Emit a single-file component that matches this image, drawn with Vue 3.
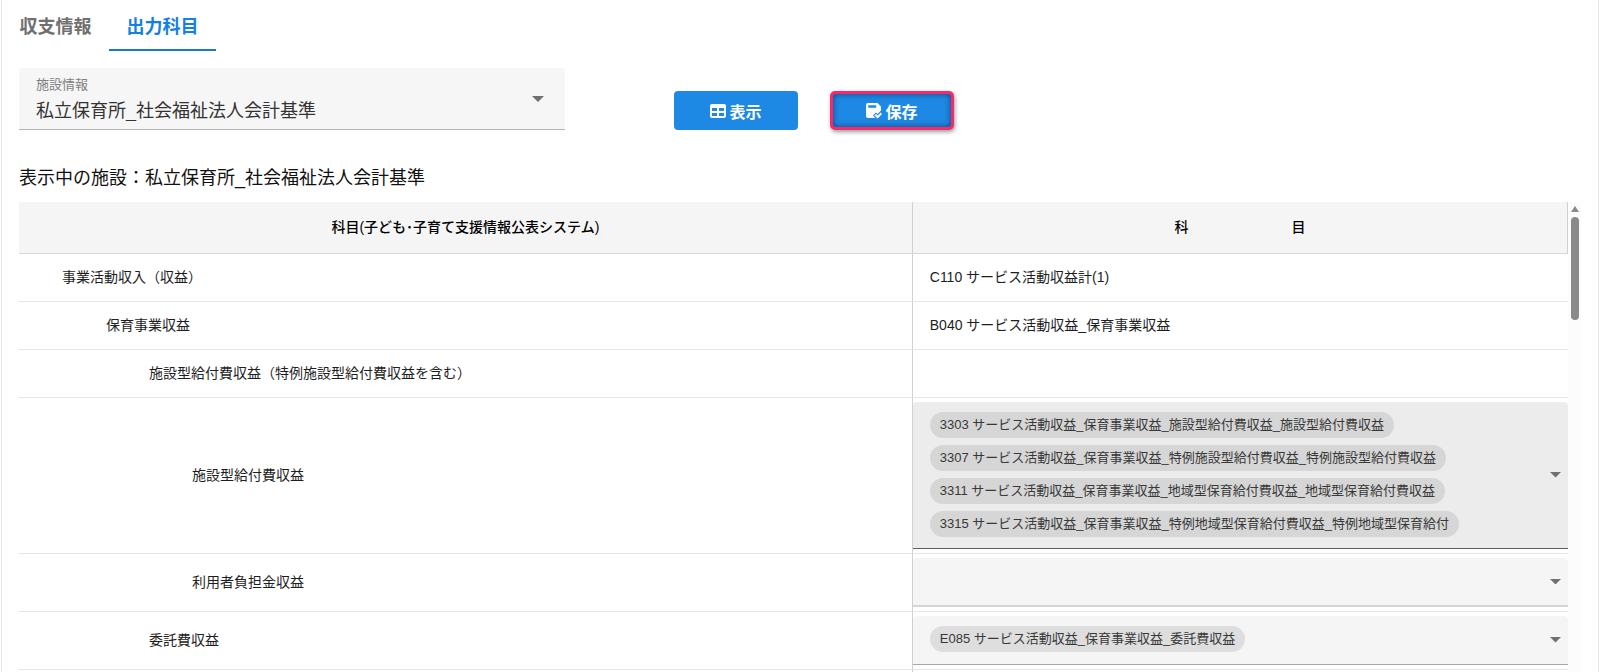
<script setup>
import { ref } from 'vue'

const facility = ref('私立保育所_社会福祉法人会計基準')

const rows = [
  { level: 1, name: '事業活動収入（収益）', text: 'C110 サービス活動収益計(1)' },
  { level: 2, name: '保育事業収益', text: 'B040 サービス活動収益_保育事業収益' },
  { level: 3, name: '施設型給付費収益（特例施設型給付費収益を含む）', text: '' },
  {
    level: 4,
    name: '施設型給付費収益',
    focused: true,
    chips: [
      '3303 サービス活動収益_保育事業収益_施設型給付費収益_施設型給付費収益',
      '3307 サービス活動収益_保育事業収益_特例施設型給付費収益_特例施設型給付費収益',
      '3311 サービス活動収益_保育事業収益_地域型保育給付費収益_地域型保育給付費収益',
      '3315 サービス活動収益_保育事業収益_特例地域型保育給付費収益_特例地域型保育給付',
    ],
  },
  { level: 4, name: '利用者負担金収益', chips: [] },
  { level: 3, name: '委託費収益', chips: ['E085 サービス活動収益_保育事業収益_委託費収益'] },
  { level: 4, name: '', text: '' },
]
</script>

<template>
  <main class="page">
    <nav class="tabs" role="tablist">
      <button class="tab" role="tab" aria-selected="false">収支情報</button>
      <button class="tab active" role="tab" aria-selected="true">出力科目</button>
    </nav>

    <div class="toolbar">
      <div class="field">
        <label for="facility">施設情報</label>
        <select id="facility" v-model="facility">
          <option>私立保育所_社会福祉法人会計基準</option>
        </select>
        <svg class="caret" viewBox="0 0 12 6" aria-hidden="true"><path d="M0 0h12L6 6z" /></svg>
      </div>
      <div class="actions">
        <button class="btn">
          <svg viewBox="0 0 16 14" aria-hidden="true">
            <path fill-rule="evenodd" d="M2 0h12a2 2 0 0 1 2 2v10a2 2 0 0 1-2 2H2a2 2 0 0 1-2-2V2a2 2 0 0 1 2-2zM2 4v3h5V4zM9 4v3h5V4zM2 9v3h5V9zM9 9v3h5V9z" />
          </svg>
          表示
        </button>
        <button class="btn save">
          <svg viewBox="0 0 16 16" aria-hidden="true">
            <path fill-rule="evenodd" d="M2 0h9.500L15 3.500V7.500L11.500 11 10 9.500 7 12.500 9.500 15H2a2 2 0 0 1-2-2V2a2 2 0 0 1 2-2zM2.200 2.200v2.600h8V2.200z" />
            <path d="M8.500 12.400L10 10.900l1.700 1.700 3-3L16.100 11l-4.400 4.500z" />
          </svg>
          保存
        </button>
      </div>
    </div>

    <p class="current">表示中の施設：私立保育所_社会福祉法人会計基準</p>

    <div class="grid-wrap">
      <table>
        <thead>
          <tr>
            <th class="subject" scope="col">科目(子ども･子育て支援情報公表システム)</th>
            <th scope="col"><span class="spread"><span>科</span><span>目</span></span></th>
          </tr>
        </thead>
        <tbody>
          <tr v-for="(row, i) in rows" :key="i">
            <td :class="'level-' + row.level">{{ row.name }}</td>
            <td :class="row.chips ? 'select-cell' : 'text-cell'">
              <button
                v-if="row.chips"
                class="multi"
                :class="{ focused: row.focused, empty: !row.chips.length }"
                :aria-label="row.name"
                aria-haspopup="listbox"
              >
                <span class="chips">
                  <span v-for="chip in row.chips" :key="chip" class="chip">{{ chip }}</span>
                </span>
                <svg class="arrow" viewBox="0 0 12 6" aria-hidden="true"><path d="M0 0h12L6 6z" /></svg>
              </button>
              <template v-else>{{ row.text }}</template>
            </td>
          </tr>
        </tbody>
      </table>
      <div class="scrollbar" aria-hidden="true">
        <svg viewBox="0 0 8 6"><path d="M4 0l4 6H0z" /></svg>
        <span class="thumb"></span>
      </div>
    </div>
  </main>
</template>

<style>
html,
body {
  background: #fff;
  overflow: hidden;
}
</style>

<style scoped>
.page {
  box-sizing: border-box;
  height: 100vh;
  margin: 0 1px;
  padding: 0 17px;
  border-left: 1px solid #e8e8e8;
  border-right: 1px solid #e8e8e8;
  overflow: hidden;
  display: flex;
  flex-direction: column;
  font-family: "Liberation Sans", "Noto Sans CJK JP", sans-serif;
  color: #1e1e1e;
}
button {
  font-family: inherit;
  border: 0;
  cursor: pointer;
}
.tabs {
  display: flex;
  height: 51px;
  margin-left: -17px;
  flex: none;
}
.tab {
  width: 107px;
  padding: 0;
  background: none;
  border-bottom: 2px solid transparent;
  font-size: 18px;
  font-weight: 700;
  color: #707070;
}
.tab.active {
  color: #1280e6;
  border-color: #1976d2;
}
.toolbar {
  display: flex;
  gap: 109px;
  margin-top: 17px;
  flex: none;
}
.field {
  position: relative;
  flex: 0 1 546px;
  height: 62px;
  box-sizing: border-box;
  border-bottom: 1px solid #b4b4b4;
  border-radius: 4px 4px 0 0;
  background: #f6f6f6;
}
.field label {
  position: absolute;
  left: 17px;
  top: 8px;
  font-size: 13px;
  line-height: 18px;
  color: #808080;
}
.field select {
  width: 100%;
  height: 100%;
  padding: 24px 40px 0 17px;
  border: 0;
  background: none;
  appearance: none;
  font-family: inherit;
  font-size: 18px;
  color: #333;
}
.caret {
  position: absolute;
  right: 21px;
  top: 28px;
  width: 12px;
  fill: #707070;
}
.actions {
  display: flex;
  gap: 32px;
  padding-top: 23px;
}
.btn {
  display: flex;
  align-items: center;
  justify-content: center;
  gap: 3px;
  width: 124px;
  height: 39px;
  padding: 0;
  border-radius: 4px;
  background: #1e88e5;
  color: #fff;
  font-size: 16px;
  font-weight: 700;
}
.btn svg {
  width: 16px;
  fill: #fff;
}
.btn.save {
  border: 3px solid #f8286c;
  border-radius: 5px;
  box-shadow: 1px 2px 4px rgba(0, 0, 0, 0.4), inset 0 0 6px rgba(0, 0, 0, 0.5);
}
.current {
  margin: 36px 0 12px;
  font-size: 18px;
  line-height: 24px;
  color: #111;
}
.grid-wrap {
  display: flex;
  flex: 1;
  min-height: 0;
  overflow: hidden;
}
table {
  flex: 1;
  align-self: flex-start;
  border-collapse: separate;
  border-spacing: 0;
  table-layout: fixed;
  font-size: 14px;
}
th {
  height: 48px;
  padding: 0 0 3px;
  background: #f5f5f5;
  border-bottom: 1px solid #d8d8d8;
  border-right: 1px solid #d0d0d0;
  font-weight: 500;
  color: #000;
}
.subject {
  width: 57.700%;
}
.spread {
  display: inline-flex;
  gap: 103px;
}
td {
  height: 44px;
  padding: 0 0 3px;
  border-bottom: 1px solid #e6e6e6;
}
td:first-child {
  border-right: 1px solid #d0d0d0;
}
.level-1 { padding-left: 43px; }
.level-2 { padding-left: 87px; }
.level-3 { padding-left: 130px; }
.level-4 { padding-left: 173px; }
.text-cell { padding-left: 17px; }
.select-cell { padding: 4px 0; }
.multi {
  display: flex;
  align-items: center;
  justify-content: space-between;
  width: 100%;
  min-height: 49px;
  box-sizing: border-box;
  padding: 0 7px 0 17px;
  border-bottom: 1px solid #a8a8a8;
  border-radius: 4px 4px 0 0;
  background: #f5f5f5;
  text-align: left;
}
.multi.empty {
  border-bottom: 2px solid #d4d4d4;
}
.multi.focused {
  background: #ececec;
  border-color: #606060;
}
.chips {
  display: flex;
  flex-direction: column;
  align-items: flex-start;
  gap: 7px;
  padding-bottom: 2px;
}
.focused .chips {
  padding: 10px 0 11px;
}
.chip {
  padding: 0 10px;
  border-radius: 13px;
  background: #dedede;
  font-size: 13px;
  line-height: 26px;
  color: #383838;
}
.focused .chip {
  background: #d6d6d6;
}
.arrow {
  width: 11px;
  fill: #707070;
}
.scrollbar {
  display: flex;
  flex-direction: column;
  align-items: center;
  width: 12px;
  padding: 4px 0 0 1px;
  background: #fcfcfc;
}
.scrollbar svg {
  width: 8px;
  fill: #8a8a8a;
}
.thumb {
  width: 8px;
  height: 103px;
  margin-top: 5px;
  border-radius: 4px;
  background: #8a8a8a;
}
</style>
